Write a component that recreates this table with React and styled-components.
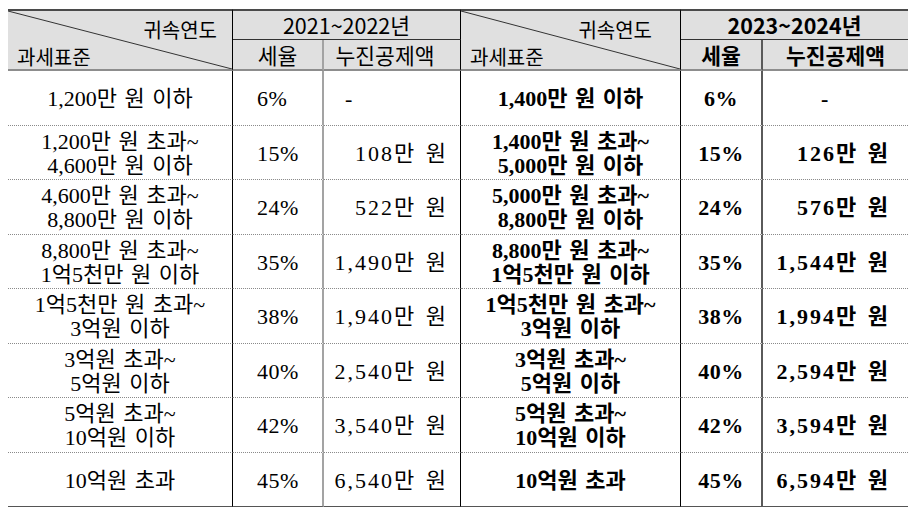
import React from "react";
import styled, { createGlobalStyle } from "styled-components";

const GlobalStyle = createGlobalStyle`
  html, body {
    margin: 0;
    padding: 0;
    background: #fff;
  }
  body {
    font-family: "Liberation Serif", "Noto Sans CJK KR", serif;
    color: #000;
  }
`;

const borders = {
  black: "1px solid #000",
  gray: "2px solid #a3a3a3",
  dark: "2px solid #5a5a5a",
  none: "0",
};

const Page = styled.div`
  padding: 9px 8px 0;
`;

const Table = styled.table`
  width: 900px;
  table-layout: fixed;
  border-collapse: separate;
  border-spacing: 0;
`;

const HeadCell = styled.th`
  box-sizing: border-box;
  height: ${(p) => p.$h || 31}px;
  padding: 0 ${(p) => p.$padRight || 0}px 0 0;
  background: #e0e0e0;
  font-family: "Noto Sans CJK KR", "Noto Sans", sans-serif;
  font-size: 21.5px;
  font-weight: ${(p) => (p.$bold ? 700 : 400)};
  line-height: 26px;
  text-align: center;
  vertical-align: middle;
  border-right: ${(p) => borders[p.$divider || "none"]};
  border-top: ${(p) => (p.$top ? "2px solid #4a4a4a" : "0")};
  border-bottom: ${(p) =>
    p.$thin ? "1px solid #333" : "2px solid #8d8d8d"};
`;

const DiagCell = styled(HeadCell)`
  position: relative;
  vertical-align: top;
`;

const DiagBox = styled.div`
  height: 58px;
  display: flex;
  flex-direction: column;
  justify-content: space-between;
  padding: 8px ${(p) => p.$padRight}px 1px 9px;
  box-sizing: border-box;
  font-size: 20px;
  font-weight: 400;
  line-height: 22px;
`;

const DiagTop = styled.span`
  text-align: right;
`;

const DiagBottom = styled.span`
  text-align: left;
`;

const Slash = styled.svg`
  position: absolute;
  inset: 0;
  width: 100%;
  height: 100%;
  pointer-events: none;
`;

const DataCell = styled.td`
  box-sizing: border-box;
  height: 54.5px;
  padding: ${(p) => p.$pad || "0"};
  padding-top: 3px;
  font-size: 22px;
  line-height: 24px;
  word-spacing: 2px;
  letter-spacing: ${(p) => p.$track || 0}px;
  font-weight: ${(p) => (p.$bold ? 700 : 400)};
  text-align: ${(p) => p.$align || "center"};
  vertical-align: middle;
  white-space: nowrap;
  border-right: ${(p) => borders[p.$divider || "none"]};
  border-bottom: ${(p) => (p.$last ? "1px solid #555" : "1px dotted #8a8a8a")};
`;

const Line = styled.span`
  display: block;
`;

const rows = [
  [["1,200만 원 이하"], "6%", "-", ["1,400만 원 이하"], "6%", "-"],
  [["1,200만 원 초과~", "4,600만 원 이하"], "15%", "108만 원", ["1,400만 원 초과~", "5,000만 원 이하"], "15%", "126만 원"],
  [["4,600만 원 초과~", "8,800만 원 이하"], "24%", "522만 원", ["5,000만 원 초과~", "8,800만 원 이하"], "24%", "576만 원"],
  [["8,800만 원 초과~", "1억5천만 원 이하"], "35%", "1,490만 원", ["8,800만 원 초과~", "1억5천만 원 이하"], "35%", "1,544만 원"],
  [["1억5천만 원 초과~", "3억원 이하"], "38%", "1,940만 원", ["1억5천만 원 초과~", "3억원 이하"], "38%", "1,994만 원"],
  [["3억원 초과~", "5억원 이하"], "40%", "2,540만 원", ["3억원 초과~", "5억원 이하"], "40%", "2,594만 원"],
  [["5억원 초과~", "10억원 이하"], "42%", "3,540만 원", ["5억원 초과~", "10억원 이하"], "42%", "3,594만 원"],
  [["10억원 초과"], "45%", "6,540만 원", ["10억원 초과"], "45%", "6,594만 원"],
];

// per column: divider on the right, alignment, padding and tracking
const cols = [
  { divider: "black" },
  { divider: "gray", align: "left", pad: "0 0 0 24px", track: 0.5 },
  { divider: "black", align: "right", pad: "0 12px 0 0", dash: "0 0 0 21px", track: 2 },
  { divider: "black", bold: true },
  { divider: "dark", bold: true, track: 0.5 },
  { align: "right", bold: true, pad: "0 18px 0 0", dash: "0 0 0 58px", track: 2 },
];

const widths = [225, 91, 137, 220, 82, 145];

function Diagonal() {
  return (
    <Slash viewBox="0 0 100 100" preserveAspectRatio="none">
      <line
        x1="0"
        y1="0"
        x2="100"
        y2="100"
        stroke="#333"
        strokeWidth="1"
        vectorEffect="non-scaling-stroke"
      />
    </Slash>
  );
}

function Corner({ padRight, divider }) {
  return (
    <DiagCell rowSpan={2} $h={62} $top $divider={divider}>
      <Diagonal />
      <DiagBox $padRight={padRight}>
        <DiagTop>귀속연도</DiagTop>
        <DiagBottom>과세표준</DiagBottom>
      </DiagBox>
    </DiagCell>
  );
}

export default function App() {
  return (
    <Page>
      <GlobalStyle />
      <Table>
        <colgroup>
          {widths.map((w, i) => (
            <col key={i} style={{ width: w }} />
          ))}
        </colgroup>
        <thead>
          <tr>
            <Corner padRight={15} divider="black" />
            <HeadCell colSpan={2} $top $thin $divider="black">
              2021~2022년
            </HeadCell>
            <Corner padRight={28} divider="black" />
            <HeadCell colSpan={2} $top $thin $bold>
              2023~2024년
            </HeadCell>
          </tr>
          <tr>
            <HeadCell $divider="gray">세율</HeadCell>
            <HeadCell $divider="black" $padRight={14}>
              누진공제액
            </HeadCell>
            <HeadCell $divider="dark" $bold>
              세율
            </HeadCell>
            <HeadCell $bold>누진공제액</HeadCell>
          </tr>
        </thead>
        <tbody>
          {rows.map((row, r) => (
            <tr key={r}>
              {row.map((cell, c) => {
                const col = cols[c];
                const isDash = cell === "-";
                return (
                  <DataCell
                    key={c}
                    $divider={col.divider}
                    $bold={col.bold}
                    $track={col.track}
                    $align={isDash ? "left" : col.align}
                    $pad={isDash ? col.dash : col.pad}
                    $last={r === rows.length - 1}
                  >
                    {Array.isArray(cell)
                      ? cell.map((t, i) => <Line key={i}>{t}</Line>)
                      : cell}
                  </DataCell>
                );
              })}
            </tr>
          ))}
        </tbody>
      </Table>
    </Page>
  );
}
